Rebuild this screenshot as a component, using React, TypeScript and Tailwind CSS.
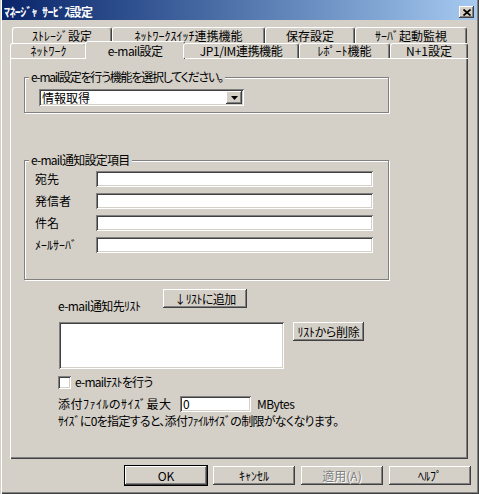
import React from "react";

const raised =
  "bg-[#d4d0c8] shadow-[inset_-1px_-1px_#404040,inset_1px_1px_#ffffff,inset_-2px_-2px_#808080]";
const sunken =
  "bg-white shadow-[inset_1px_1px_#808080,inset_-1px_-1px_#ffffff,inset_2px_2px_#404040,inset_-2px_-2px_#d4d0c8]";
const tab =
  "flex items-center justify-center rounded-t-[3px] border-l border-t border-r border-l-white border-t-white border-r-[#404040] bg-[#d4d0c8] shadow-[inset_-1px_0_#808080]";

function Btn({
  children,
  className = "",
  def,
  disabled,
}: {
  children: React.ReactNode;
  className?: string;
  def?: boolean;
  disabled?: boolean;
}) {
  return (
    <div
      className={`flex h-[19px] items-center justify-center ${raised} ${
        def ? "outline outline-1 outline-black" : ""
      } ${disabled ? "text-[#808080] [text-shadow:1px_1px_#ffffff]" : ""} ${className}`}
    >
      {children}
    </div>
  );
}

function Group({
  label,
  className = "",
  labelClass = "",
  children,
}: {
  label: string;
  className?: string;
  labelClass?: string;
  children?: React.ReactNode;
}) {
  return (
    <div
      className={`relative border border-[#808080] shadow-[1px_1px_#ffffff,inset_1px_1px_#ffffff] ${className}`}
    >
      <span className={`absolute -top-[8px] left-[4px] bg-[#d4d0c8] px-[2px] ${labelClass}`}>{label}</span>
      {children}
    </div>
  );
}

function Field({ label }: { label: string }) {
  return (
    <div className="flex h-[16px] items-center">
      <span className="w-[61px]">{label}</span>
      <div className={`h-[16px] w-[277px] ${sunken}`} />
    </div>
  );
}

export default function App() {
  return (
    <div className="h-[494px] w-[479px] overflow-hidden bg-[#d4d0c8] font-['Noto_Sans_CJK_JP',sans-serif] text-[12px] leading-[14px] text-black [font-feature-settings:'palt'] shadow-[inset_1px_0_#d4d0c8,inset_2px_0_#ffffff,inset_-1px_-1px_#404040,inset_-2px_-2px_#808080]">
      {/* Title bar */}
      <div className="mx-[2px] flex h-[20px] items-center justify-between bg-linear-to-r from-[#0a246a] to-[#a6caf0] pl-[2px] pr-[3px] pt-[4px]">
        <span className="flex gap-[5px] font-bold tracking-[-0.6px] text-white">
          <span>ﾏﾈｰｼﾞｬ</span>
          <span>ｻｰﾋﾞｽ設定</span>
        </span>
        <div className={`flex h-[12px] w-[15px] items-center justify-center ${raised}`}>
          <svg width="8" height="7" viewBox="0 0 8 7">
            <path d="M0.5 0.5L7.5 6.5M7.5 0.5L0.5 6.5" stroke="#000" strokeWidth="1.7" />
          </svg>
        </div>
      </div>

      {/* Tabs */}
      <div className="mt-[7px] flex h-[16px] pl-[12px]">
        <div className={`${tab} w-[100px]`}>ｽﾄﾚｰｼﾞ設定</div>
        <div className={`${tab} w-[153px]`}>ﾈｯﾄﾜｰｸｽｲｯﾁ連携機能</div>
        <div className={`${tab} w-[90px]`}>保存設定</div>
        <div className={`${tab} w-[112px]`}>ｻｰﾊﾞ起動監視</div>
      </div>
      <div className="relative z-10 flex h-[15px] pl-[10px]">
        <div className={`${tab} w-[77px]`}>ﾈｯﾄﾜｰｸ</div>
        <div className={`${tab} -mx-[2px] -mt-[2px] h-[18px] w-[100px] tracking-[-0.6px] shadow-none`}>e-mail設定</div>
        <div className={`${tab} w-[116px] tracking-[-0.4px]`}>JP1/IM連携機能</div>
        <div className={`${tab} w-[91px]`}>ﾚﾎﾟｰﾄ機能</div>
        <div className={`${tab} w-[78px]`}>N+1設定</div>
      </div>

      {/* Panel */}
      <div className="ml-[10px] flex h-[401px] w-[458px] flex-col pl-[14px] pt-[19px] shadow-[inset_1px_1px_#ffffff,inset_-1px_-1px_#404040,inset_-2px_-2px_#808080]">
        <Group
          label="e-mail設定を行う機能を選択してください。"
          labelClass="tracking-[-1.25px]"
          className="h-[36px] w-[365px]"
        >
          <div className={`ml-[14px] mt-[11px] flex h-[17px] w-[205px] items-center p-[2px] ${sunken}`}>
            <span className="flex-1 pl-[1px]">情報取得</span>
            <div className={`flex h-[13px] w-[16px] items-center justify-center ${raised}`}>
              <svg width="7" height="4" viewBox="0 0 7 4">
                <path d="M0 0h7L3.5 4z" fill="#000" />
              </svg>
            </div>
          </div>
        </Group>

        <Group label="e-mail通知設定項目" labelClass="tracking-[-0.75px]" className="mt-[47px] h-[120px] w-[365px]">
          <div className="flex flex-col gap-[6px] pl-[10px] pt-[10px]">
            <Field label="宛先" />
            <Field label="発信者" />
            <Field label="件名" />
            <Field label="ﾒｰﾙｻｰﾊﾞ" />
          </div>
        </Group>

        <div className="mt-[9px] flex items-start">
          <span className="ml-[34px] mt-[10px] w-[105px] tracking-[-0.6px]">e-mail通知先ﾘｽﾄ</span>
          <Btn className="w-[84px] tracking-[-0.6px]">↓ﾘｽﾄに追加</Btn>
        </div>

        <div className="mt-[9px] flex items-start">
          <div className={`ml-[35px] h-[47px] w-[225px] ${sunken}`} />
          <Btn className="ml-[9px] w-[71px] tracking-[-0.3px]">ﾘｽﾄから削除</Btn>
        </div>

        <div className="mt-[6px] flex items-center">
          <div className={`ml-[34px] h-[13px] w-[13px] ${sunken}`} />
          <span className="ml-[4px] tracking-[-0.75px]">e-mailﾃｽﾄを行う</span>
        </div>

        <div className="mt-[7px] flex items-center">
          <span className="ml-[34px] w-[122px] tracking-[0.5px]">添付ﾌｧｲﾙのｻｲｽﾞ最大</span>
          <div className={`flex h-[16px] w-[71px] items-center pl-[3px] ${sunken}`}>0</div>
          <span className="ml-[6px] tracking-[-0.5px]">MBytes</span>
        </div>

        <div className="ml-[34px] mt-[2px] tracking-[-0.7px]">
          ｻｲｽﾞに0を指定すると、添付ﾌｧｲﾙｻｲｽﾞの制限がなくなります。
        </div>
      </div>

      {/* Dialog buttons */}
      <div className="mt-[7px] flex gap-[6px] pl-[125px]">
        <Btn def className="w-[82px]">OK</Btn>
        <Btn className="w-[82px]">ｷｬﾝｾﾙ</Btn>
        <Btn disabled className="w-[82px]">適用(A)</Btn>
        <Btn className="w-[82px]">ﾍﾙﾌﾟ</Btn>
      </div>
    </div>
  );
}
